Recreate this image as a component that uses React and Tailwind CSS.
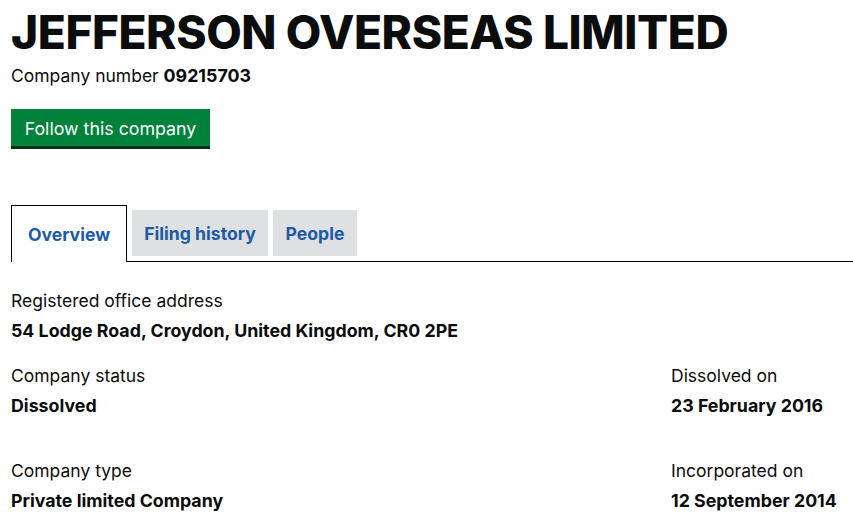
export default function App() {
  const font = { fontFamily: 'Inter, "Liberation Sans", sans-serif' };
  return (
    <div className="w-[853px] h-[523px] overflow-hidden bg-white text-[#0b0c0c] px-[11px]" style={font}>
      {/* Header */}
      <h1 className="pt-[6px] text-[46px] leading-[52px] font-extrabold tracking-[-0.4px]">JEFFERSON OVERSEAS LIMITED</h1>
      <p className="mt-[7px] text-[17.5px] leading-[22px]">
        Company number <strong className="font-bold text-[17.8px]">09215703</strong>
      </p>
      <button className="mt-[22px] w-[199px] h-[40px] bg-[#00823b] text-white text-[17.8px] border-b-[3px] border-[#003418] pt-[4px]">
        Follow this company
      </button>

      {/* Tabs */}
      <div className="mt-[56px] flex items-start border-b border-black -mr-[11px]">
        <div className="w-[116px] h-[57px] -mb-px bg-white border border-black border-b-0 flex items-center justify-center pt-[2px] text-[17.6px] font-bold text-[#1d5ba4]">
          Overview
        </div>
        <div className="ml-[5px] mt-[5px] w-[136px] h-[46px] bg-[#dee0e2] flex items-center justify-center pt-[2px] text-[17.6px] font-bold text-[#1d5ba4]">
          Filing history
        </div>
        <div className="ml-[5px] mt-[5px] w-[84px] h-[46px] bg-[#dee0e2] flex items-center justify-center pt-[2px] text-[17.6px] font-bold text-[#1d5ba4]">
          People
        </div>
      </div>

      {/* Details */}
      <div className="mt-[28px] text-[17.5px] leading-[22px]">
        <p>Registered office address</p>
        <p className="mt-[8px] font-bold text-[17.8px]">54 Lodge Road, Croydon, United Kingdom, CR0 2PE</p>
      </div>
      <div className="mt-[23px] grid grid-cols-[660px_1fr] text-[17.5px] leading-[22px]">
        <div>
          <p>Company status</p>
          <p className="mt-[8px] font-bold text-[17.8px]">Dissolved</p>
        </div>
        <div>
          <p>Dissolved on</p>
          <p className="mt-[8px] font-bold text-[17.8px]">23 February 2016</p>
        </div>
        <div className="mt-[43px]">
          <p>Company type</p>
          <p className="mt-[8px] font-bold text-[17.8px]">Private limited Company</p>
        </div>
        <div className="mt-[43px]">
          <p>Incorporated on</p>
          <p className="mt-[8px] font-bold text-[17.8px]">12 September 2014</p>
        </div>
      </div>
    </div>
  );
}
